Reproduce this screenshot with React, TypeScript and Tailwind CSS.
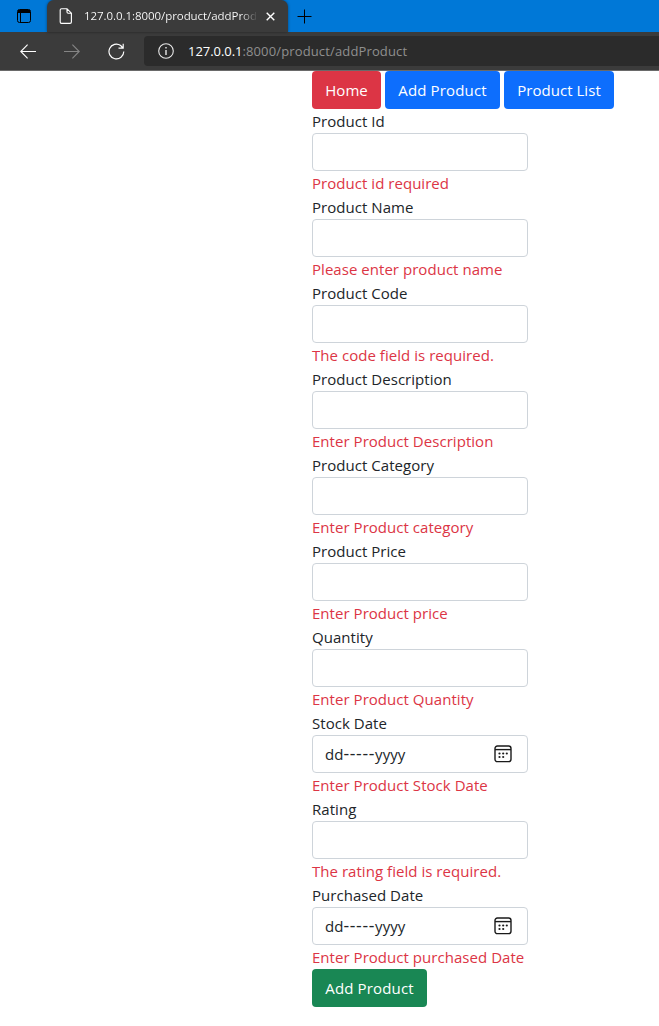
type Field = { label: string; error: string; date?: boolean };

const fields: Field[] = [
  { label: "Product Id", error: "Product id required" },
  { label: "Product Name", error: "Please enter product name" },
  { label: "Product Code", error: "The code field is required." },
  { label: "Product Description", error: "Enter Product Description" },
  { label: "Product Category", error: "Enter Product category" },
  { label: "Product Price", error: "Enter Product price" },
  { label: "Quantity", error: "Enter Product Quantity" },
  { label: "Stock Date", error: "Enter Product Stock Date", date: true },
  { label: "Rating", error: "The rating field is required." },
  { label: "Purchased Date", error: "Enter Product purchased Date", date: true },
];

function CalendarIcon() {
  return (
    <svg width="18" height="18" viewBox="0 0 18 18" fill="none" stroke="#1a1a1a" strokeWidth="1.4">
      <rect x="1" y="1" width="16" height="15.6" rx="2.4" />
      <path d="M1 4.6H17" />
      <g fill="#1a1a1a" stroke="none">
        <circle cx="5.5" cy="8.5" r="1.1" />
        <circle cx="9.2" cy="8.5" r="1.1" />
        <circle cx="12.8" cy="8.5" r="1.1" />
        <circle cx="5.5" cy="12" r="1.1" />
        <circle cx="9.2" cy="12" r="1.1" />
      </g>
    </svg>
  );
}

function TabStrip() {
  return (
    <div className="flex h-8 bg-[#0078d7]">
      <div className="flex w-[47px] items-center pl-[17px]">
        <svg width="14" height="14" viewBox="0 0 14 14" fill="none" stroke="#000">
          <rect x="0.5" y="0.5" width="13" height="13" rx="2" />
          <path d="M1 1.5H13M1 2.5H13M1 3.5H13M3.5 4V13" />
        </svg>
      </div>
      <div className="flex w-[241px] items-center rounded-t-[7px] bg-[#3b3b3b] pl-3 shadow-[0_0_3px_rgba(0,0,0,0.45)]">
        <svg width="14" height="16" viewBox="0 0 14 16" fill="none" stroke="#fff" strokeWidth="1.15">
          <path d="M2.5 0.7H8L12.4 5.2V14Q12.4 15.4 11 15.4H2.5Q1.2 15.4 1.2 14V2Q1.2 0.7 2.5 0.7ZM8 0.7V4Q8 5.2 9.2 5.2H12.4" />
        </svg>
        <span className="ml-[11px] w-[174px] bg-gradient-to-r from-white from-90% to-[#3b3b3b] bg-clip-text text-[11.5px] leading-4 tracking-[-0.06px] whitespace-nowrap text-transparent">
          127.0.0.1:8000/product/addProd
        </span>
        <svg className="ml-2" width="9" height="9" viewBox="0 0 9 9" stroke="#fff" strokeWidth="1.4">
          <path d="M0.7 0.7L8.3 8.3M8.3 0.7L0.7 8.3" />
        </svg>
      </div>
      <div className="flex items-center pl-[9px]">
        <svg width="15" height="15" viewBox="0 0 15 15" stroke="#000">
          <path d="M0.5 7.5H14.5M7.5 0.5V14.5" />
        </svg>
      </div>
    </div>
  );
}

function Toolbar() {
  return (
    <div className="flex h-[39px] items-center border-b border-[#6a6a6a] bg-[#3b3b3b]">
      <svg className="ml-5 shrink-0" width="16" height="15" viewBox="0 0 16 15" fill="none" stroke="#fff" strokeWidth="1.1">
        <path d="M16 7.5H0.8M7.6 0.7L0.8 7.5L7.6 14.3" />
      </svg>
      <svg className="ml-7 shrink-0" width="16" height="15" viewBox="0 0 16 15" fill="none" stroke="#858585" strokeWidth="1.1">
        <path d="M0 7.5H15.2M8.4 0.7L15.2 7.5L8.4 14.3" />
      </svg>
      <svg className="ml-7 shrink-0" width="17" height="17" viewBox="0 0 17 17" fill="none" stroke="#fff" strokeWidth="1.15">
        <path d="M15.8 8.6A7.4 7.4 0 1 1 12.7 2.5L14.9 5M15.2 0.8V5.1H10.5" />
      </svg>
      <div className="ml-[19px] flex h-[30px] flex-1 items-center rounded-l bg-[#2b2b2b] pl-[14px] text-[13px] tracking-[0.14px] whitespace-nowrap">
        <svg width="16" height="16" viewBox="0 0 16 16" fill="none" stroke="#e8e8e8" strokeWidth="1.1">
          <circle cx="8" cy="8" r="7.3" />
          <path d="M8 7V12M8 4V5.5" strokeWidth="1.4" />
        </svg>
        <span className="ml-[14px] tracking-[-0.05px] text-white">127.0.0.1</span>
        <span className="text-[#8f8f8f]">:8000/product/addProduct</span>
      </div>
    </div>
  );
}

export default function App() {
  return (
    <div className="h-[1026px] overflow-hidden bg-white font-['Open_Sans',sans-serif] text-[15px] leading-6 text-[#212529]">
      <TabStrip />
      <Toolbar />
      <main className="ml-[312px] tracking-[0.04px]">
        <nav className="flex gap-1 text-white">
          <button className="h-[38px] w-[69px] rounded bg-[#dc3545]">Home</button>
          <button className="h-[38px] w-[115px] rounded bg-[#0d6efd] tracking-[0.15px]">Add Product</button>
          <button className="h-[38px] w-[110px] rounded bg-[#0d6efd]">Product List</button>
        </nav>
        <form>
          {fields.map((field) => (
            <div key={field.label} className="whitespace-nowrap">
              <label className="block h-6">{field.label}</label>
              <div className="flex h-[38px] w-[216px] items-center justify-between rounded border border-[#ced4da] pr-[15px] pl-3">
                {field.date && (
                  <>
                    <span>
                      dd<span className="text-[17.5px] leading-none tracking-[0.7px]">-----</span>yyyy
                    </span>
                    <CalendarIcon />
                  </>
                )}
              </div>
              <p className="h-6 text-[#dc3545]">{field.error}</p>
            </div>
          ))}
          <button type="button" className="block h-[38px] w-[115px] rounded bg-[#198754] tracking-[0.15px] text-white">
            Add Product
          </button>
        </form>
      </main>
    </div>
  );
}
